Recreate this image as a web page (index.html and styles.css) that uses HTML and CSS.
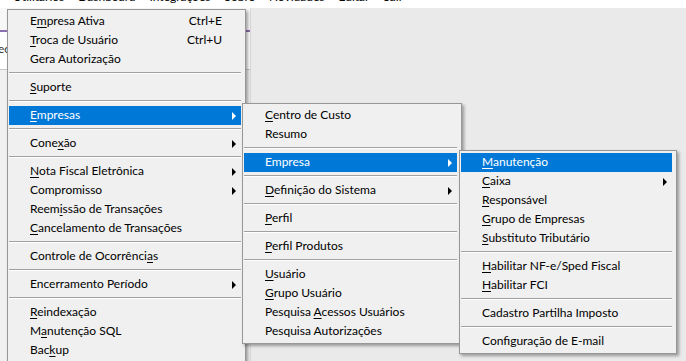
FILE: index.html
```html
<!DOCTYPE html>
<html lang="pt-BR">
<head>
<meta charset="utf-8">
<title>Menu Utilitários</title>
<link rel="stylesheet" href="styles.css">
</head>
<body>
<nav class="menubar">
  <span class="mb-item first">Utilitários</span>
  <span class="mb-item">Dashboard</span>
  <span class="mb-item">Integrações</span>
  <span class="mb-item">Sobre</span>
  <span class="mb-item">Novidades</span>
  <span class="mb-item">Editar</span>
  <span class="mb-item">Sair</span>
</nav>
<div class="workspace">
  <aside class="sidebar">
    <div class="side-head"></div>
    <div class="side-tab">ec</div>
    <div class="side-body"></div>
  </aside>
  <section class="panel"></section>
</div>

<div class="menu menu-main">
  <div class="item"><span class="label">E<u>m</u>presa Ativa</span><span class="key">Ctrl+E</span></div>
  <div class="item"><span class="label"><u>T</u>roca de Usuário</span><span class="key">Ctrl+U</span></div>
  <div class="item"><span class="label">Gera Autorização</span></div>
  <div class="sep"></div>
  <div class="item"><span class="label"><u>S</u>uporte</span></div>
  <div class="sep"></div>
  <div class="item sub active"><span class="label"><u>E</u>mpresas</span><span class="arrow"></span></div>
  <div class="sep"></div>
  <div class="item sub"><span class="label">Cone<u>x</u>ão</span><span class="arrow"></span></div>
  <div class="sep"></div>
  <div class="item sub"><span class="label"><u>N</u>ota Fiscal Eletrônica</span><span class="arrow"></span></div>
  <div class="item sub"><span class="label">Compromisso</span><span class="arrow"></span></div>
  <div class="item"><span class="label">Reem<u>i</u>ssão de Transações</span></div>
  <div class="item"><span class="label"><u>C</u>ancelamento de Transações</span></div>
  <div class="sep"></div>
  <div class="item"><span class="label">Controle de Ocorrênci<u>a</u>s</span></div>
  <div class="sep"></div>
  <div class="item sub"><span class="label">Encerramento Período</span><span class="arrow"></span></div>
  <div class="sep"></div>
  <div class="item"><span class="label"><u>R</u>eindexação</span></div>
  <div class="item"><span class="label">M<u>a</u>nutenção SQL</span></div>
  <div class="item"><span class="label">Bac<u>k</u>up</span></div>
</div>

<div class="menu menu-sub2">
  <div class="item"><span class="label"><u>C</u>entro de Custo</span></div>
  <div class="item"><span class="label">Resumo</span></div>
  <div class="sep"></div>
  <div class="item sub active"><span class="label">Empresa</span><span class="arrow"></span></div>
  <div class="sep"></div>
  <div class="item sub"><span class="label"><u>D</u>efinição do Sistema</span><span class="arrow"></span></div>
  <div class="sep"></div>
  <div class="item"><span class="label"><u>P</u>erfil</span></div>
  <div class="sep"></div>
  <div class="item"><span class="label"><u>P</u>erfil Produtos</span></div>
  <div class="sep"></div>
  <div class="item"><span class="label"><u>U</u>suário</span></div>
  <div class="item"><span class="label"><u>G</u>rupo Usuário</span></div>
  <div class="item"><span class="label">Pesquisa <u>A</u>cessos Usuários</span></div>
  <div class="item"><span class="label">Pesquisa Autorizações</span></div>
</div>

<div class="menu menu-sub3">
  <div class="item active"><span class="label"><u>M</u>anutenção</span></div>
  <div class="item sub"><span class="label"><u>C</u>aixa</span><span class="arrow"></span></div>
  <div class="item"><span class="label"><u>R</u>esponsável</span></div>
  <div class="item"><span class="label"><u>G</u>rupo de Empresas</span></div>
  <div class="item"><span class="label"><u>S</u>ubstituto Tributário</span></div>
  <div class="sep"></div>
  <div class="item"><span class="label"><u>H</u>abilitar NF-e/Sped Fiscal</span></div>
  <div class="item"><span class="label"><u>H</u>abilitar FCI</span></div>
  <div class="sep"></div>
  <div class="item"><span class="label">Cadastro Partilha Imposto</span></div>
  <div class="sep"></div>
  <div class="item"><span class="label">Configuração de E-mail</span></div>
</div>
</body>
</html>
```

FILE: styles.css
```css
* { box-sizing: border-box; }

html, body {
  margin: 0;
  padding: 0;
}

body {
  width: 686px;
  height: 361px;
  overflow: hidden;
  position: relative;
  background: #ffffff;
  font-family: Lato, "Noto Sans", sans-serif;
  font-size: 12px;
  color: #000;
}

.menubar {
  height: 8px;
  overflow: hidden;
  background: #ffffff;
  display: flex;
  padding-left: 6px;
}

.mb-item {
  padding: 0 7px;
  line-height: 16px;
  margin-top: -11px;
  white-space: nowrap;
}

/* application area behind the menus */
.workspace {
  display: flex;
  height: 353px;
}

.sidebar {
  width: 250px;
  display: flex;
  flex-direction: column;
  background: #f0f0f0;
}

.side-head {
  height: 24px;
  background: #f7f7f7;
  border-bottom: 2px solid #8c6fb0;
}

.side-tab {
  height: 38px;
  line-height: 34px;
  margin-left: -2px;
  color: #333;
  background: #ffffff;
  border-bottom: 1px solid #c8c8c8;
}

.side-body {
  flex: 1;
  background: #f0f0f0;
}

.panel {
  flex: 1;
  background: #eaeaea;
  border-left: 1px solid #dadada;
}

/* popup menus */
.menu {
  position: absolute;
  background: #f0f0f0;
  border: 1px solid #979797;
  padding: 2px 4px 2px 1px;
  box-shadow: 2px 2px 3px rgba(0, 0, 0, 0.35);
  white-space: nowrap;
}

.menu-main {
  left: 7px;
  top: 9px;
  width: 239px;
  padding-bottom: 24px;
}

.menu-sub2 {
  left: 242px;
  top: 103px;
  width: 220px;
}

.menu-sub3 {
  left: 459px;
  top: 150px;
  width: 218px;
}

.item {
  height: 19px;
  display: flex;
  align-items: center;
  padding: 0 5px 2px 21px;
}

.item.active {
  background: #0078d7;
  color: #ffffff;
}

.label u {
  text-decoration: underline;
  text-underline-offset: 2px;
}

.key {
  margin-left: auto;
  margin-right: 14px;
}

.arrow {
  margin-left: auto;
  margin-top: 2px;
  width: 0;
  height: 0;
  border-left: 4px solid #000;
  border-top: 4px solid transparent;
  border-bottom: 4px solid transparent;
}

.item.active .arrow {
  border-left-color: #ffffff;
}

.sep {
  height: 9px;
  padding-top: 3px;
}

.sep::before {
  content: "";
  display: block;
  height: 1px;
  background: #a0a0a0;
  border-bottom: 1px solid #ffffff;
  box-sizing: content-box;
}
```
